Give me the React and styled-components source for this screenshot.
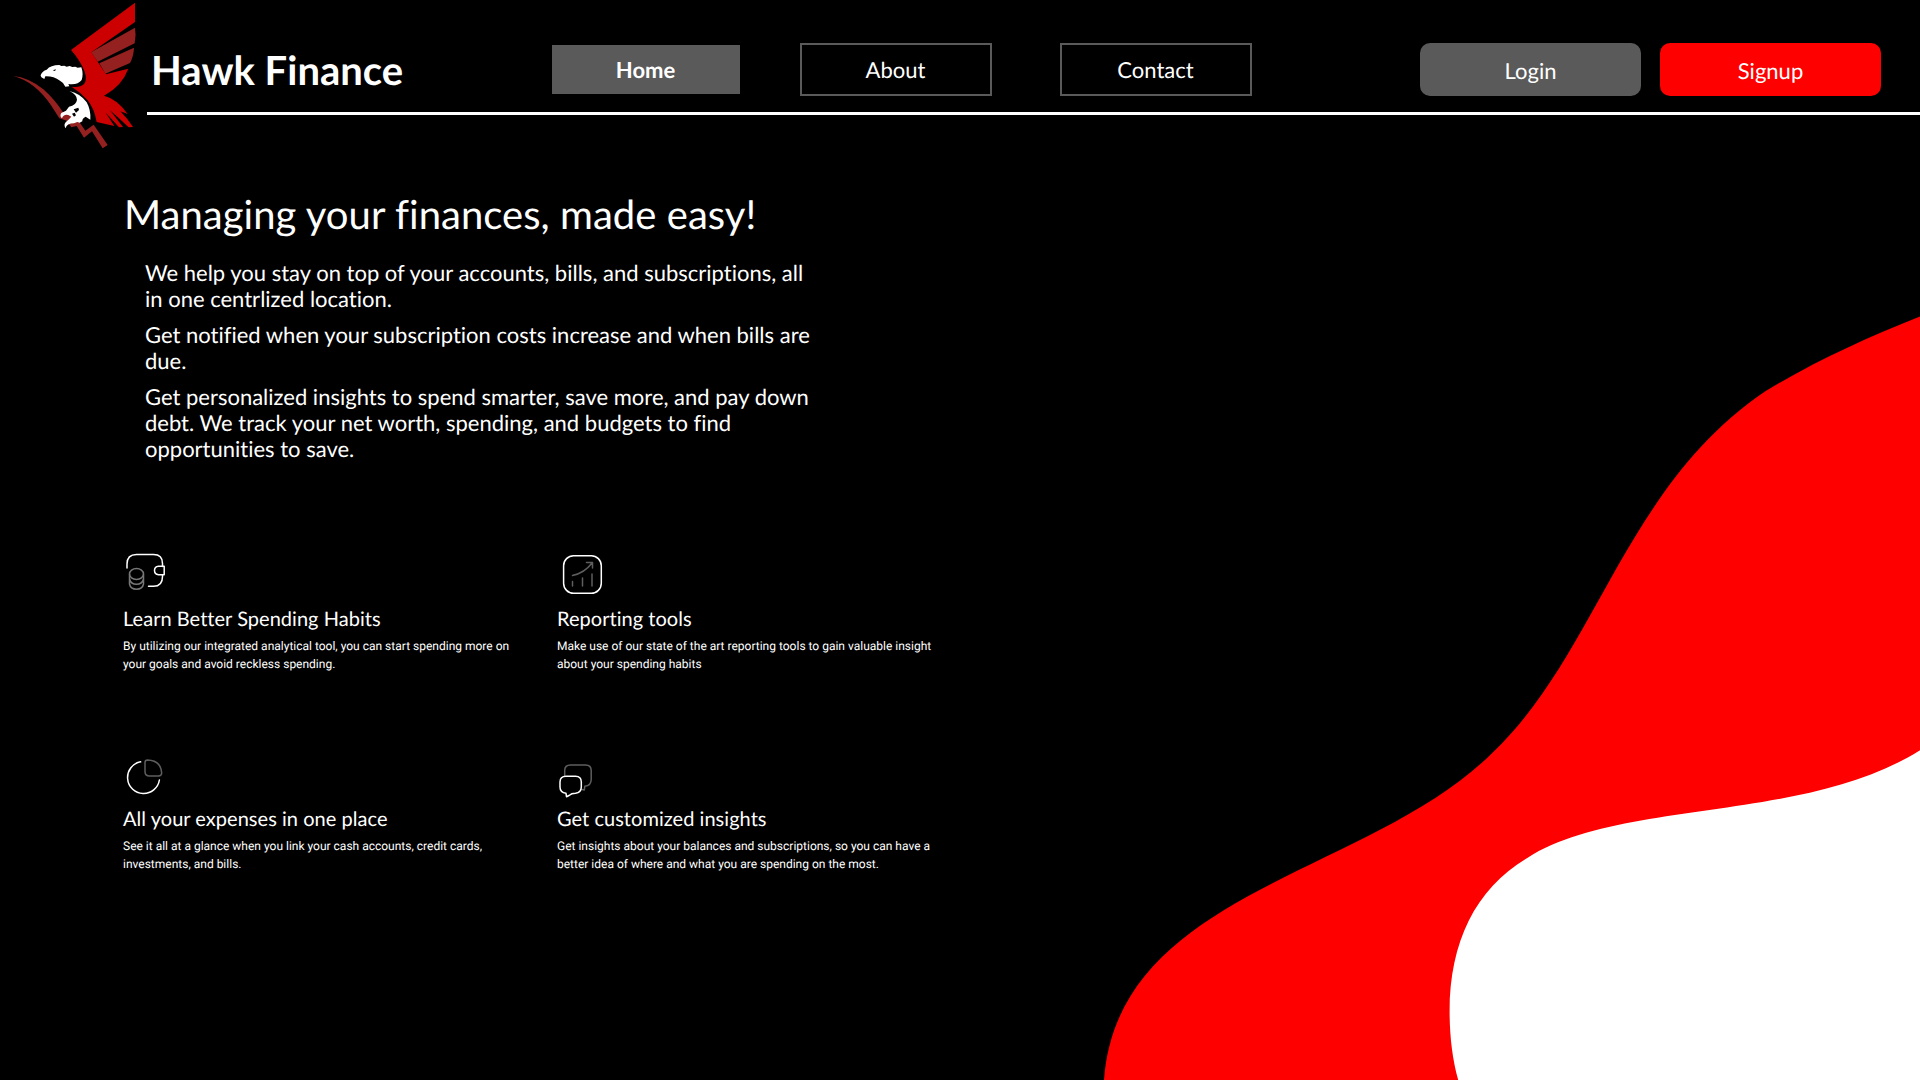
import React from 'react';
import styled, { createGlobalStyle } from 'styled-components';

const GlobalStyle = createGlobalStyle`
  * { box-sizing: border-box; }
  body { margin: 0; background: #000; }
  h1, h2, h3, p { margin: 0; font-weight: 400; }
  button, a { font: inherit; color: inherit; text-decoration: none; }
`;

const Page = styled.div`
  position: relative;
  width: 100%;
  height: 100vh;
  min-height: 1080px;
  overflow: hidden;
  background: #000;
  color: #fff;
  font-family: Lato, sans-serif;
  font-variant-ligatures: none;
  text-rendering: geometricPrecision;
`;

const Header = styled.header`
  display: flex;
  height: 160px;
`;

const Logo = styled.svg`
  flex: none;
  width: 147px;
  height: 160px;
`;

const Bar = styled.div`
  flex: 1;
  height: 115px;
  display: flex;
  align-items: flex-start;
  border-bottom: 3px solid #fff;
`;

const Brand = styled.div`
  width: 403px;
  padding: 46px 0 0 4px;
  font-size: 40px;
  line-height: 48px;
  font-weight: 700;
`;

const Nav = styled.nav`
  display: flex;
  padding-top: 43px;
`;

const NavLink = styled.a`
  width: 192px;
  height: 53px;
  margin-left: ${(p) => p.$gap || 0}px;
  padding-right: 1px;
  border: 2px solid ${(p) => (p.$active ? 'transparent' : '#5a5a5a')};
  background: ${(p) => (p.$active ? '#5a5a5a' : 'transparent')};
  background-clip: padding-box;
  font-size: 22px;
  line-height: 49px;
  font-weight: ${(p) => (p.$active ? 700 : 400)};
  text-align: center;
`;

const Actions = styled.div`
  display: flex;
  gap: 19px;
  margin-left: auto;
  padding: 43px 39px 0 0;
`;

const ActionButton = styled.button`
  width: 221px;
  height: 53px;
  padding: 2px 0 0;
  border: 0;
  border-radius: 10px;
  background: ${(p) => (p.$primary ? '#f00' : '#5a5a5a')};
  color: #fff;
  font-size: 22px;
  line-height: 26px;
  text-rendering: inherit;
`;

const Main = styled.main`
  position: relative;
  padding: 30px 0 0 123px;
`;

const Headline = styled.h1`
  padding-left: 1px;
  font-size: 40px;
  line-height: 48px;
  letter-spacing: 0.04px;
`;

const Intro = styled.div`
  display: flex;
  flex-direction: column;
  gap: 10px;
  width: 690px;
  padding: 22px 0 0 22px;
  font-size: 22px;
  line-height: 26px;
`;

const Features = styled.section`
  display: grid;
  grid-template-columns: 434px 434px;
  grid-auto-rows: 200px;
  padding-top: 85px;
`;

const Feature = styled.article`
  display: flex;
  flex-direction: column;
`;

const FeatureIcon = styled.svg`
  width: 48px;
  height: 60px;
  fill: none;
  stroke: #fff;
  stroke-width: 1.5;
  stroke-linecap: round;
  stroke-linejoin: round;
`;

const FeatureTitle = styled.h2`
  font-size: 20px;
  line-height: 24px;
  letter-spacing: 0.035px;
`;

const FeatureText = styled.p`
  padding-top: 6px;
  font-family: Roboto, sans-serif;
  font-size: 12px;
  line-height: 18px;
`;

const Waves = styled.svg`
  position: absolute;
  right: 0;
  bottom: 0;
  width: 840px;
  height: 780px;
`;

function HawkLogo() {
  return (
    <Logo viewBox="0 0 441 480">
      <g fill="#942020">
        <path d="M405 83L273 157L293 185L404 130Q409 105 405 83Z" />
        <path d="M402 143L298 190L316 221L390 189Q401 168 402 143Z" />
        <path d="M40 228Q85 232 130 268Q162 296 190 338L205 342L238 366L256 392L281 374L323 435L308 445L276 394L252 413L230 378L214 382L200 362L178 355L153 316Q105 245 40 228Z" />
      </g>
      <g fill="#c00">
        <path d="M405 8V66L274 157L318 223L385 206Q366 258 312 287Q352 297 383 342L361 334Q381 354 399 381L386 382L352 350L330 331L369 381L357 382L316 337L343 378L290 366Q283 325 262 300Q243 278 215 260Q240 264 252 252Q262 240 254 215Q240 180 213 150Z" />
      </g>
      <g fill="#fff">
        <path d="M122 225Q127 213 140 209Q152 195 178 195L184 198L193 197L200 200L209 198L217 201L226 200L233 203L244 202Q251 222 245 240Q233 256 205 252L208 259L196 260Q192 248 180 242Q160 228 136 229L133 237Q121 232 122 225Z" />
        <path d="M208 273Q242 281 260 307Q273 330 271 359L257 350Q246 355 247 364L239 368L232 366L222 370Q200 370 197 385Q190 375 197 367L207 358L214 350L205 345Q190 342 186 355Q178 349 184 339L198 332L207 320Q229 316 231 299Q230 283 208 273Z" />
      </g>
      <path d="M158 211L168 208L165 213Z" />
      <path d="M221 328L235 323L237 330L228 338Z M216 341L224 338L228 346L222 350Z" />
    </Logo>
  );
}

const icons = {
  wallet: (
    <>
      <path d="M4 21V17Q4 7.500 13.500 7.500H30.500Q39.500 7.500 39.500 16.500V19.500M39.500 28V29.500Q39.500 39.300 30.500 39.300H25.500" />
      <path d="M35.500 19.300H41.200V27.700H35.500Q31.500 27.200 31.500 23.500Q31.500 19.800 35.500 19.300Z" />
      <g stroke="#777">
        <ellipse cx="13.500" cy="27" rx="7" ry="5.500" />
        <path d="M6.500 27.500V37Q7.500 42.200 13.500 42.200T20.500 37V27.500M6.500 32Q8 37.300 13.500 37.300T20.500 32" />
      </g>
    </>
  ),
  chart: (
    <>
      <rect x="6.600" y="8.700" width="37.700" height="37.600" rx="10" />
      <g stroke="#5e5e5e">
        <path d="M15.500 28.500Q27.500 26 35 16M29.500 15.500H35.500V21M15.500 34.500V39M25.500 31V39M35 27V39" />
      </g>
    </>
  ),
  pie: (
    <>
      <path d="M17.600 14.800A16 16 0 1 0 36.400 33" />
      <path
        stroke="#5e5e5e"
        d="M24.500 13Q38 13.500 38.700 26Q38.500 29 35.500 29H26.500Q22 29 22 24.500V15.500Q22 13 24.500 13Z"
      />
    </>
  ),
  chat: (
    <>
      <path
        stroke="#5e5e5e"
        d="M7.700 28.500V23.500Q7.700 17.900 13.500 17.900H28.500Q34.200 17.900 34.200 23.500V32.500Q34.200 38.500 27.800 39.300L27.300 43L25 42.500"
      />
      <path d="M9 29.200H18.500Q24.300 29.200 24.300 35V40Q24.300 45.500 18.500 46.300Q14.500 46.300 12 48.500L9.500 49.700L9 46.300Q3 45.500 3 40V35Q3 29.200 9 29.200Z" />
    </>
  ),
};

const features = [
  {
    icon: 'wallet',
    title: 'Learn Better Spending Habits',
    lines: ['By utilizing our integrated analytical tool, you can start spending more on', 'your goals and avoid reckless spending.'],
  },
  {
    icon: 'chart',
    title: 'Reporting tools',
    lines: ['Make use of our state of the art reporting tools to gain valuable insight', 'about your spending habits'],
  },
  {
    icon: 'pie',
    title: 'All your expenses in one place',
    lines: ['See it all at a glance when you link your cash accounts, credit cards,', 'investments, and bills.'],
  },
  {
    icon: 'chat',
    title: 'Get customized insights',
    lines: ['Get insights about your balances and subscriptions, so you can have a', 'better idea of where and what you are spending on the most.'],
  },
];

export default function App() {
  return (
    <Page>
      <GlobalStyle />
      <Waves viewBox="1080 300 840 780">
        <path
          fill="#f00"
          d="M1104 1080C1118 890 1370 875 1492.500 752.700C1597.500 653 1624.600 486 1765.700 391C1817 360 1866 338 1920 316.400V1080Z"
        />
        <path
          fill="#fff"
          d="M1458.200 1080C1452 1058 1449.600 1034 1449.600 1011.300C1449.600 942 1476 888 1527.300 858C1620 799 1805 823 1920 750.200V1080Z"
        />
      </Waves>
      <Header>
        <HawkLogo />
        <Bar>
          <Brand>Hawk Finance</Brand>
          <Nav>
            <NavLink $active>Home</NavLink>
            <NavLink $gap={58}>About</NavLink>
            <NavLink $gap={68}>Contact</NavLink>
          </Nav>
          <Actions>
            <ActionButton>Login</ActionButton>
            <ActionButton $primary>Signup</ActionButton>
          </Actions>
        </Bar>
      </Header>
      <Main>
        <Headline>Managing your finances, made easy!</Headline>
        <Intro>
          <p>
            We help you stay on top of your accounts, bills, and subscriptions, all
            <br />
            in one centrlized location.
          </p>
          <p>
            Get notified when your subscription costs increase and when bills are
            <br />
            due.
          </p>
          <p>
            Get personalized insights to spend smarter, save more, and pay down
            <br />
            debt. We track your net worth, spending, and budgets to find
            <br />
            opportunities to save.
          </p>
        </Intro>
        <Features>
          {features.map((f) => (
            <Feature key={f.icon}>
              <FeatureIcon viewBox="0 0 48 60">{icons[f.icon]}</FeatureIcon>
              <FeatureTitle>{f.title}</FeatureTitle>
              <FeatureText>
                {f.lines[0]}
                <br />
                {f.lines[1]}
              </FeatureText>
            </Feature>
          ))}
        </Features>
      </Main>
    </Page>
  );
}
